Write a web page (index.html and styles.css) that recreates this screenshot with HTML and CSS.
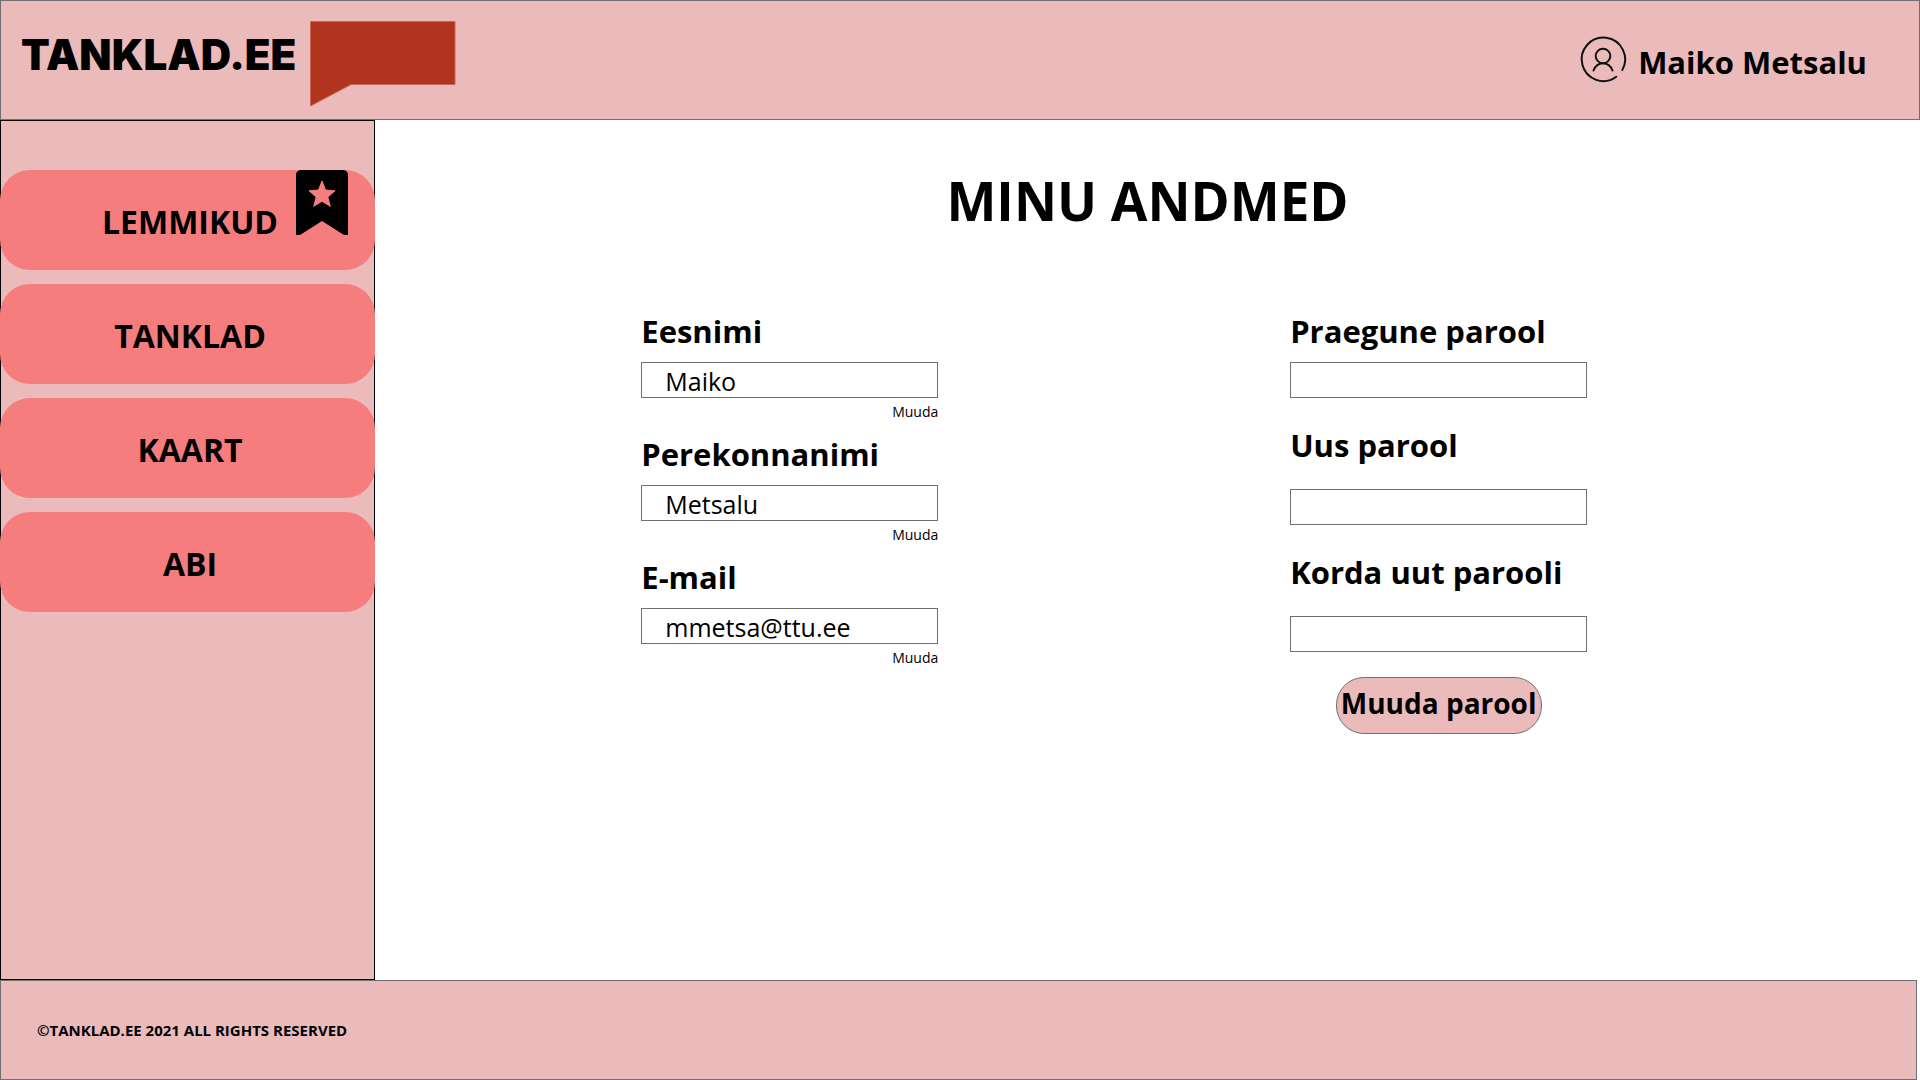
FILE: index.html
```html
<!DOCTYPE html>
<html lang="et">
<head>
  <meta charset="utf-8">
  <meta name="viewport" content="width=device-width, initial-scale=1">
  <title>Minu andmed – Tanklad.ee</title>
  <link rel="stylesheet" href="styles.css">
</head>
<body>
  <header class="header">
    <a class="brand" href="#">
      <span class="brand-name">TANKLAD.EE</span>
      <svg class="brand-flag" width="146" height="86" viewBox="0 0 146 86" aria-hidden="true">
        <path d="M.5.5H145V63.500H41L.5 85Z" fill="#b3341e" stroke="#c9665a" stroke-width="1"/>
      </svg>
    </a>
    <a class="user" href="#">
      <svg width="46" height="46" viewBox="0 0 46 46" fill="none" stroke="#111" stroke-width="2" stroke-linecap="round" aria-hidden="true">
        <path d="M42.300 33A21.700 21.700 0 1 0 36.300 39.800"/>
        <circle cx="23" cy="19" r="7.300"/>
        <path d="M13.500 33.500C15.500 28.500 19 26.300 23 26.300S30.500 28.500 32.500 33.500"/>
      </svg>
      <span>Maiko Metsalu</span>
    </a>
  </header>

  <div class="body">
    <nav class="sidebar">
      <a class="nav-item" href="#">LEMMIKUD
        <svg class="bookmark" width="52" height="65" viewBox="0 0 52 65" aria-hidden="true">
          <path d="M4 0H48Q52 1 52 5V65H48L26 51L4 65H0V5Q0 1 4 0Z" fill="#000"/>
          <path d="M26 11L29.500 20L39 20.800L31.800 27L34.300 36.300L26 31.300L17.700 36.300L20.200 27L13 20.800L22.500 20Z" fill="#f67d7d" stroke="#f67d7d" stroke-linejoin="round"/>
        </svg>
      </a>
      <a class="nav-item" href="#">TANKLAD</a>
      <a class="nav-item" href="#">KAART</a>
      <a class="nav-item" href="#">ABI</a>
    </nav>

    <main class="main">
      <h1 class="title">MINU ANDMED</h1>
      <div class="forms">
        <form class="profile">
          <div class="field">
            <label for="first">Eesnimi</label>
            <input id="first" type="text" value="Maiko">
            <button class="edit" type="button">Muuda</button>
          </div>
          <div class="field">
            <label for="last">Perekonnanimi</label>
            <input id="last" type="text" value="Metsalu">
            <button class="edit" type="button">Muuda</button>
          </div>
          <div class="field">
            <label for="email">E-mail</label>
            <input id="email" type="email" value="mmetsa@ttu.ee">
            <button class="edit" type="button">Muuda</button>
          </div>
        </form>
        <form class="password">
          <div class="field">
            <label for="current">Praegune parool</label>
            <input id="current" type="password">
          </div>
          <div class="field spaced">
            <label for="new">Uus parool</label>
            <input id="new" type="password">
          </div>
          <div class="field spaced">
            <label for="repeat">Korda uut parooli</label>
            <input id="repeat" type="password">
          </div>
          <button class="submit" type="submit">Muuda parool</button>
        </form>
      </div>
    </main>
  </div>

  <footer class="footer">©TANKLAD.EE 2021 ALL RIGHTS RESERVED</footer>
</body>
</html>
```

FILE: styles.css
```css
* {
  box-sizing: border-box;
}

body {
  margin: 0;
  min-height: 100vh;
  display: flex;
  flex-direction: column;
  background: #fff;
  color: #000;
  font-family: "Open Sans", "Noto Sans", sans-serif;
}

a {
  color: inherit;
  text-decoration: none;
}

.header {
  height: 120px;
  display: flex;
  justify-content: space-between;
  align-items: flex-start;
  padding: 20px 52px 0 20px;
  background: #ebbbbb;
  border: 1px solid #707070;
}

.brand {
  display: flex;
  gap: 14px;
}

.brand-name {
  font: 900 42px/68px Inter, sans-serif;
}

.user {
  display: flex;
  align-items: center;
  gap: 12px;
  padding-top: 12px;
  font-size: 31px;
  line-height: 50px;
  font-weight: 700;
}

.user span {
  padding-top: 4px;
}

.user svg {
  overflow: visible;
}

.body {
  flex: 1;
  display: flex;
}

.sidebar {
  width: 375px;
  flex: none;
  display: flex;
  flex-direction: column;
  gap: 14px;
  padding-top: 49px;
  background: #ebbbbb;
  border: 1px solid #000;
}

.nav-item {
  position: relative;
  height: 100px;
  display: flex;
  align-items: center;
  justify-content: center;
  margin: 0 -1px;
  padding: 2px 0 0 5px;
  border-radius: 30px;
  background: #f67d7d;
  font-size: 32px;
  font-weight: 700;
}

.bookmark {
  position: absolute;
  top: 0;
  right: 27px;
}

.main {
  flex: 1;
}

.title {
  margin: 46px 0 0;
  text-align: center;
  font-size: 53px;
  line-height: 70px;
  font-weight: 700;
}

.forms {
  display: grid;
  grid-template-columns: 28fr 297px 37fr 297px 35fr;
  padding-top: 73px;
}

.profile {
  grid-column: 2;
}

.password {
  grid-column: 4;
}

.field {
  display: flex;
  flex-direction: column;
}

.field label {
  margin-bottom: 9px;
  font-size: 31px;
  line-height: 44px;
  font-weight: 700;
  white-space: nowrap;
}

.field input {
  height: 36px;
  padding: 2px 23px 0;
  border: 1px solid #707070;
  border-radius: 0;
  background: #fff;
  color: #000;
  font-family: inherit;
  font-size: 25px;
}

.edit {
  align-self: flex-end;
  margin: 4px 0 10px;
  padding: 0;
  border: 0;
  background: none;
  color: #000;
  font-family: inherit;
  font-size: 14px;
  line-height: 20px;
}

.spaced {
  padding-top: 25px;
}

.spaced label {
  margin-bottom: 22px;
}

.submit {
  display: block;
  width: 206px;
  height: 57px;
  margin: 25px auto 0;
  padding: 0 0 6px;
  border: 1px solid #707070;
  border-radius: 28px;
  background: #ebbbbb;
  color: #000;
  font-family: inherit;
  font-size: 28px;
  font-weight: 700;
  white-space: nowrap;
}

.footer {
  height: 100px;
  display: flex;
  align-items: center;
  margin-right: 3px;
  padding-left: 36px;
  background: #ebbbbb;
  border: 1px solid #707070;
  font-size: 15px;
  font-weight: 700;
}
```
